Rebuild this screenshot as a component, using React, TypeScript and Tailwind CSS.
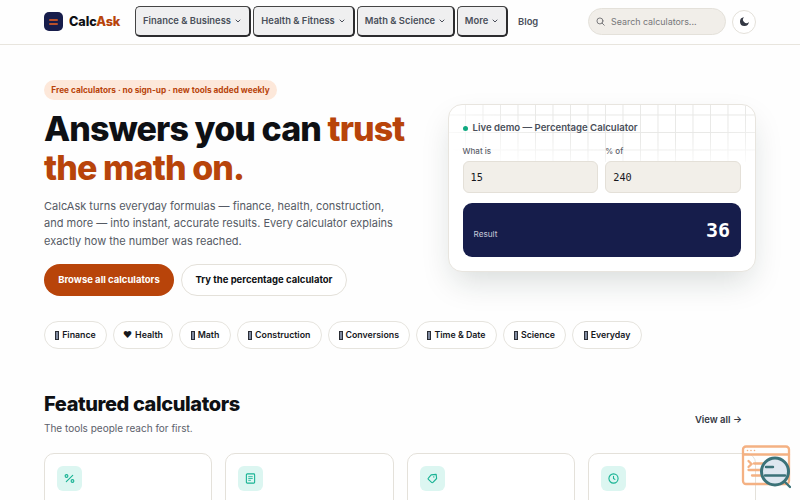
import { ChevronDown } from "lucide-react";

const menus = [
  { label: "Finance & Business", width: "w-[116px]" },
  { label: "Health & Fitness", width: "w-[102px]" },
  { label: "Math & Science", width: "w-[98px]" },
  { label: "More", width: "w-[51px]" },
];

const categories = [
  { name: "Finance", width: "w-[63px]" },
  { icon: "♥", name: "Health", width: "w-[60px]" },
  { name: "Math", width: "w-[52px]" },
  { name: "Construction", width: "w-[84.500px]" },
  { name: "Conversions", width: "w-[82.500px]" },
  { name: "Time & Date", width: "w-[81px]" },
  { name: "Science", width: "w-[63px]" },
  { name: "Everyday", width: "w-[70px]" },
];

const featured = [
  {
    name: "percent",
    icon: (
      <>
        <path d="M19 5 5 19" />
        <circle cx="5.500" cy="6.500" r="3" />
        <circle cx="18.500" cy="17.500" r="3" />
      </>
    ),
  },
  {
    name: "loan",
    icon: (
      <>
        <rect x="3" y="2" width="18" height="20" rx="2" />
        <path d="M8 8h8M8 12h8M8 16h4" strokeWidth="1.800" />
      </>
    ),
  },
  {
    name: "discount",
    icon: (
      <>
        <path d="m21 12-8 8.500a2 2 0 0 1-3 0L3 14a2 2 0 0 1 0-3l6-7 11-1z" />
        <path d="M14.500 8.500h.5" />
      </>
    ),
  },
  {
    name: "time",
    icon: (
      <>
        <circle cx="12" cy="12" r="10" />
        <path d="M12 7v5l3 2" />
      </>
    ),
  },
];

function Header() {
  return (
    <header className="h-[44.500px] border-b border-[#e8e5de] px-[44px] flex items-center">
      <div className="w-[91px] flex items-center gap-[6px] shrink-0">
        <span className="size-[19px] rounded-[5px] bg-[#171d4b] flex flex-col items-center justify-center gap-[2px]">
          <span className="w-[9px] h-[2px] rounded bg-[#b9502a]" />
          <span className="w-[9px] h-[2px] rounded bg-[#b9502a]" />
        </span>
        <span className="text-[12.700px] font-extrabold tracking-[-0.1px] text-[#0e1014]">
          Calc<span className="text-[#b8440a]">Ask</span>
        </span>
      </div>
      <nav className="flex items-center gap-[2px]">
        {menus.map((m) => (
          <button
            key={m.label}
            className={`h-[31px] shrink-0 rounded-[5px] border-t border-l border-r-2 border-b-2 border-t-[#444] border-l-[#444] border-r-[#2c2c2e] border-b-[#2c2c2e] bg-[#efeff0] flex items-center justify-center gap-[3px] text-[9.400px] font-semibold text-[#4a4f5a] whitespace-nowrap ${m.width}`}
          >
            {m.label}
            <ChevronDown size={8} strokeWidth={3} />
          </button>
        ))}
        <span className="ml-[8px] text-[9.400px] font-semibold text-[#4a4f5a]">Blog</span>
      </nav>
      <div className="ml-auto flex items-center gap-[6px]">
        <div className="w-[138px] h-[27px] rounded-full border border-[#e4e1da] bg-[#f1eee9] flex items-center gap-[6px] pl-[7px] text-[8.900px] text-[#77777a]">
          <svg viewBox="0 0 24 24" className="size-[9px]" fill="none" stroke="currentColor" strokeWidth="2.600" strokeLinecap="round">
            <circle cx="10.500" cy="10.500" r="8" />
            <path d="m16 16 6 6" />
          </svg>
          Search calculators...
        </div>
        <div className="size-[24px] rounded-full border border-[#e4e1da] bg-white flex items-center justify-center">
          <svg viewBox="0 0 24 24" className="size-[11px]" fill="#343844">
            <path d="M21.500 13A9.700 9.700 0 1 1 11 2.500a7 7 0 0 0 10.500 10.500z" />
          </svg>
        </div>
      </div>
    </header>
  );
}

function Field({ label, value }: { label: string; value: string }) {
  return (
    <label className="text-[8px] leading-[13px] font-medium text-[#5c606a]">
      {label}
      <span className="mt-[3px] h-[32px] rounded-[6px] border border-[#e4e0d8] bg-[#f2efe9] flex items-center px-[7px] font-['DejaVu_Sans_Mono',monospace] text-[10.200px] font-normal text-[#16181d]">
        {value}
      </span>
    </label>
  );
}

function Demo() {
  return (
    <div className="relative w-[308.500px] h-[168px] mt-[24px] rounded-[14px] border border-[#e8e5df] bg-white px-[14px] pt-[16px] shadow-[0_14px_32px_-6px_rgba(20,40,35,0.17)]">
      {/* graph paper, strongest at the top */}
      <div className="absolute inset-x-0 top-0 h-[57px] rounded-t-[13px] bg-[linear-gradient(#e8e8e6_1px,transparent_1px),linear-gradient(90deg,#e8e8e6_1px,transparent_1px)] bg-[size:17.500px_17.500px] bg-[position:-1.500px_-8px] [mask-image:radial-gradient(ellipse_at_60%_0%,black_45%,transparent_90%)]" />
      <div className="relative">
        <div className="h-[14px] flex items-center gap-[5px] text-[9.600px] font-semibold text-[#4a4f5a]">
          <span className="size-[5px] rounded-full bg-[#10a981]" />
          Live demo — Percentage Calculator
        </div>
        <div className="mt-[10px] grid grid-cols-2 gap-[7px]">
          <Field label="What is" value="15" />
          <Field label="% of" value="240" />
        </div>
        <div className="mt-[10px] h-[54px] rounded-[9px] bg-[#161d4b] px-[11px] flex items-baseline justify-between pt-[12px] text-white">
          <span className="text-[8.200px] text-[#c5c8d8]">Result</span>
          <span className="font-['DejaVu_Sans_Mono',monospace] text-[20px] leading-[30px] font-bold">36</span>
        </div>
      </div>
    </div>
  );
}

function Hero() {
  return (
    <section className="px-[44px] pt-[35.500px] h-[276.500px] flex justify-between">
      <div className="w-[365px]">
        <div className="w-[233px] h-[20px] rounded-full bg-[#fde8da] flex items-center justify-center text-[8.250px] font-bold text-[#b8440a] whitespace-nowrap">
          Free calculators · no sign-up · new tools added weekly
        </div>
        <h1 className="mt-[10px] text-[34px] leading-[38.500px] font-extrabold tracking-[-0.9px] text-[#0e1014] whitespace-nowrap">
          Answers you can <span className="text-[#b8440a]">trust<br />the math on.</span>
        </h1>
        <p className="mt-[10.500px] text-[11px] leading-[17.600px] text-[#555a64] whitespace-nowrap">
          CalcAsk turns everyday formulas — finance, health, construction,<br />
          and more — into instant, accurate results. Every calculator explains<br />
          exactly how the number was reached.
        </p>
        <div className="mt-[14px] flex gap-[7px] text-[9.500px] font-bold">
          <button className="w-[130px] h-[32px] rounded-full bg-[#b8440a] text-white">Browse all calculators</button>
          <button className="w-[166px] h-[32px] rounded-full border border-[#e4e1da] bg-white text-[#0e1014]">Try the percentage calculator</button>
        </div>
      </div>
      <Demo />
    </section>
  );
}

function Corner() {
  return (
    <svg className="fixed left-[741px] top-[444px]" width="50" height="45" viewBox="0 0 50 45" fill="none" strokeLinecap="round">
      <g stroke="#f4b183" strokeWidth="2.300">
        <rect x="2" y="2.500" width="46" height="37.500" rx="3" />
        <path d="M2 10.500h46M7.500 17l3 3-3 3M13 19.500h10M7.500 26h14M11 31.500h10" />
        <path d="M6.500 6.500h.01M10 6.500h.01M13.500 6.500h.01" strokeWidth="1.600" />
      </g>
      <circle cx="34" cy="27.500" r="13.500" fill="#dee7f0" stroke="#3b7278" strokeWidth="3" />
      <path d="M25 23h7M24 31.500h20M44 38l5 5" stroke="#3b7278" strokeWidth="2.400" />
    </svg>
  );
}

export default function App() {
  return (
    <div className="h-[500px] overflow-hidden bg-[#fefefe] font-[Inter,'Liberation_Sans',sans-serif]">
      <Header />
      <Hero />
      <section className="px-[44px] flex gap-[6px]">
        {categories.map((c) => (
          <span
            key={c.name}
            className={`h-[28px] shrink-0 rounded-full border border-[#e6e4de] bg-white flex items-center justify-center gap-[3px] text-[8.800px] font-semibold text-[#16181d] whitespace-nowrap ${c.width}`}
          >
            {c.icon ? <span>{c.icon}</span> : <span className="shrink-0 w-[4px] h-[9px] border border-[#2a2d35] bg-[#7f8aa0]" />}
            {c.name}
          </span>
        ))}
      </section>
      <section className="px-[44px] pt-[41.500px]">
        <div className="flex justify-between">
          <div>
            <h2 className="text-[20px] leading-[26px] font-extrabold tracking-[-0.4px] text-[#0e1014]">Featured calculators</h2>
            <p className="mt-[3px] text-[10px] leading-[16px] text-[#5c606a]">The tools people reach for first.</p>
          </div>
          <span className="mt-[22px] mr-[14px] text-[9.500px] leading-[14px] font-semibold text-[#343844]">View all →</span>
        </div>
        <div className="mt-[17px] grid grid-cols-4 gap-[13px]">
          {featured.map((f) => (
            <div key={f.name} className="h-[120px] rounded-[10px] border border-[#e4e1da] bg-white p-[12px]">
              <span className="size-[25px] rounded-[6px] bg-[#dcf6f1] text-[#18b394] flex items-center justify-center">
                <svg viewBox="0 0 24 24" className="size-[11px]" fill="none" stroke="currentColor" strokeWidth="2.400" strokeLinecap="round" strokeLinejoin="round">
                  {f.icon}
                </svg>
              </span>
            </div>
          ))}
        </div>
      </section>
      <Corner />
    </div>
  );
}
